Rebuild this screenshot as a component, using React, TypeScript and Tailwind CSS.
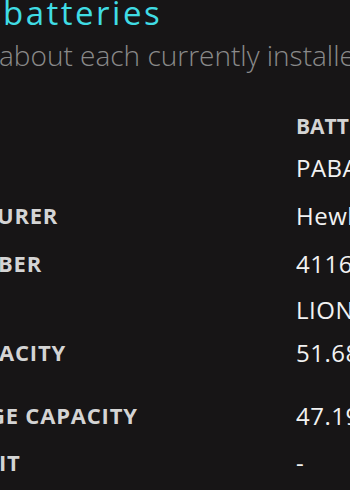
import React from 'react';

type Row = {
  label: string;
  value: string;
  labelShift?: string;
  header?: boolean;
  height: string;
};

const rows: Row[] = [
  { label: '', value: 'BATTERY 1', header: true, height: 'h-[40px]' },
  { label: '', value: 'PABAS0241231', height: 'h-[48px]' },
  { label: 'URER', value: 'Hewlett-Packard', labelShift: '-ml-[3px]', height: 'h-[48px]' },
  { label: 'BER', value: '41167 2019/03/06', labelShift: '-ml-[2px]', height: 'h-[46px]' },
  { label: '', value: 'LION', height: 'h-[43px]' },
  { label: 'ACITY', value: '51.688 mWh', labelShift: '-ml-[1px]', height: 'h-[63px]' },
  { label: 'GE CAPACITY', value: '47.196 mWh', labelShift: '-ml-[11px]', height: 'h-[47px]' },
  { label: 'IT', value: '-', labelShift: '-ml-[1px]', height: 'h-[47px]' },
];

export default function App() {
  return (
    <div
      className="w-[350px] h-[490px] overflow-hidden bg-[#171516]"
      style={{ fontFamily: '"Open Sans", "Noto Sans", sans-serif' }}
    >
      {/* Page heading, cut on the left */}
      <h1 className="-mt-[4px] pl-[3px] text-[33px] leading-none font-normal tracking-[2.5px] text-[#40dce4] whitespace-nowrap">
        batteries
      </h1>
      <p className="mt-[12px] -ml-[1px] text-[28px] leading-none font-light text-[#8a8a8a] whitespace-nowrap">
        about each currently installed battery
      </p>

      {/* Battery table */}
      <div className="mt-[47px] flex flex-col">
        {rows.map((row, i) => (
          <div key={i} className={`flex items-start ${row.height}`}>
            <div className="w-[296px] shrink-0 overflow-hidden">
              <span
                className={`block whitespace-nowrap text-[22px] leading-none font-bold tracking-[0.8px] text-[#d4d4d4] ${row.labelShift ?? ''}`}
              >
                {row.label || '\u00a0'}
              </span>
            </div>
            <div className="flex-1 overflow-hidden">
              {row.header ? (
                <span className="block whitespace-nowrap text-[21px] leading-none font-bold text-[#d4d4d4]">
                  {row.value}
                </span>
              ) : (
                <span className="block whitespace-nowrap text-[24px] leading-none font-normal tracking-[0.5px] text-[#f2f2f2]">
                  {row.value}
                </span>
              )}
            </div>
          </div>
        ))}
      </div>
    </div>
  );
}
